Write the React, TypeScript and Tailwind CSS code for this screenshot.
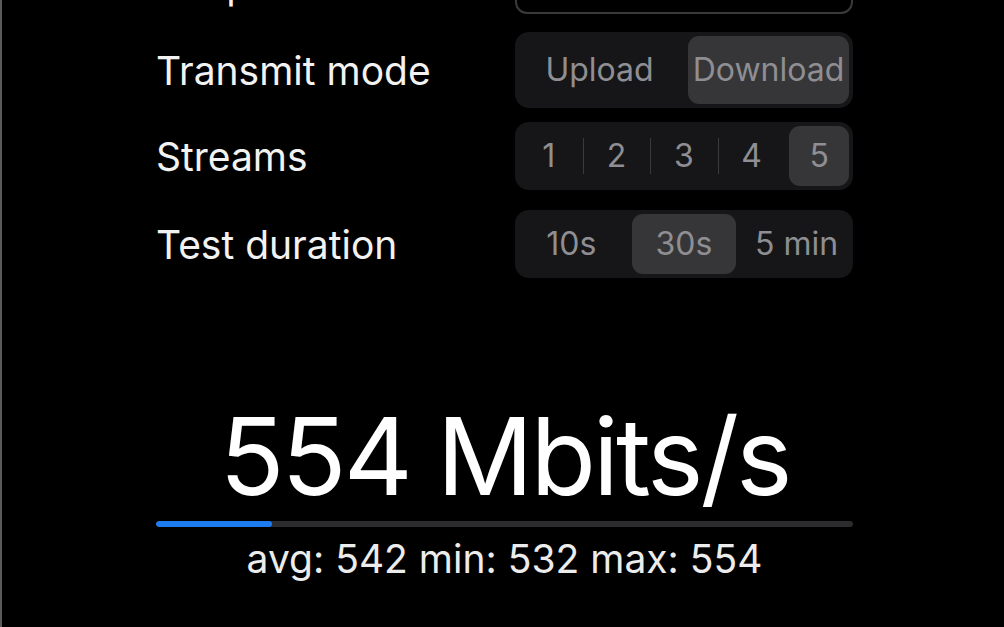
import React from "react";

const font = { fontFamily: "Inter, 'Noto Sans', sans-serif" };

function Segmented({
  items,
  selected,
  height,
  separators = false,
}: {
  items: string[];
  selected: number;
  height: string;
  separators?: boolean;
}) {
  return (
    <div className={`flex w-[338px] ${height} rounded-[14px] bg-[#161618]`}>
      {items.map((it, i) => {
        const sel = i === selected;
        const showSep =
          separators && i > 0 && i !== selected && i - 1 !== selected;
        return (
          <div key={it} className="relative flex flex-1 p-[4px]">
            {showSep && (
              <div className="absolute left-0 top-1/2 h-[36px] w-px -translate-y-1/2 bg-[#3a3a3c]" />
            )}
            <div
              className={`flex flex-1 items-center justify-center rounded-[11px] text-[32px] leading-none text-[#8e8e93] ${
                sel ? "bg-[#363638]" : ""
              }`}
            >
              {it}
            </div>
          </div>
        );
      })}
    </div>
  );
}

function Row({
  label,
  children,
  className = "",
}: {
  label: string;
  children: React.ReactNode;
  className?: string;
}) {
  return (
    <div className={`flex items-center justify-between ${className}`}>
      <div className="text-[39px] leading-none text-[#f2f2f2]">{label}</div>
      {children}
    </div>
  );
}

export default function App() {
  return (
    <div
      className="h-[627px] w-full overflow-hidden border-l-2 border-[#5a5a5a] bg-black"
      style={font}
    >
      <div className="ml-[154px] flex w-[697px] flex-col">
        <Row label="Endpoint" className="mt-[-46px]">
          <div className="h-[60px] w-[338px] rounded-[12px] border-2 border-[#3a3a3c] bg-black" />
        </Row>
        <Row label="Transmit mode" className="mt-[18px]">
          <Segmented items={["Upload", "Download"]} selected={1} height="h-[76px]" />
        </Row>
        <Row label="Streams" className="mt-[14px]">
          <Segmented
            items={["1", "2", "3", "4", "5"]}
            selected={4}
            height="h-[68px]"
            separators
          />
        </Row>
        <Row label="Test duration" className="mt-[20px]">
          <Segmented items={["10s", "30s", "5 min"]} selected={1} height="h-[68px]" />
        </Row>

        <div className="mt-[125px] text-center text-[107px] leading-none tracking-[-3px] text-white">
          554 Mbits/s
        </div>
        <div className="mt-[11px] h-[6px] w-full overflow-hidden rounded-full bg-[#2c2c2e]">
          <div className="h-full w-[116px] rounded-full bg-[#1c7cf0]" />
        </div>
        <div className="mt-[12px] text-center text-[39px] leading-none text-[#ececec]">
          avg: 542 min: 532 max: 554
        </div>
      </div>
    </div>
  );
}
